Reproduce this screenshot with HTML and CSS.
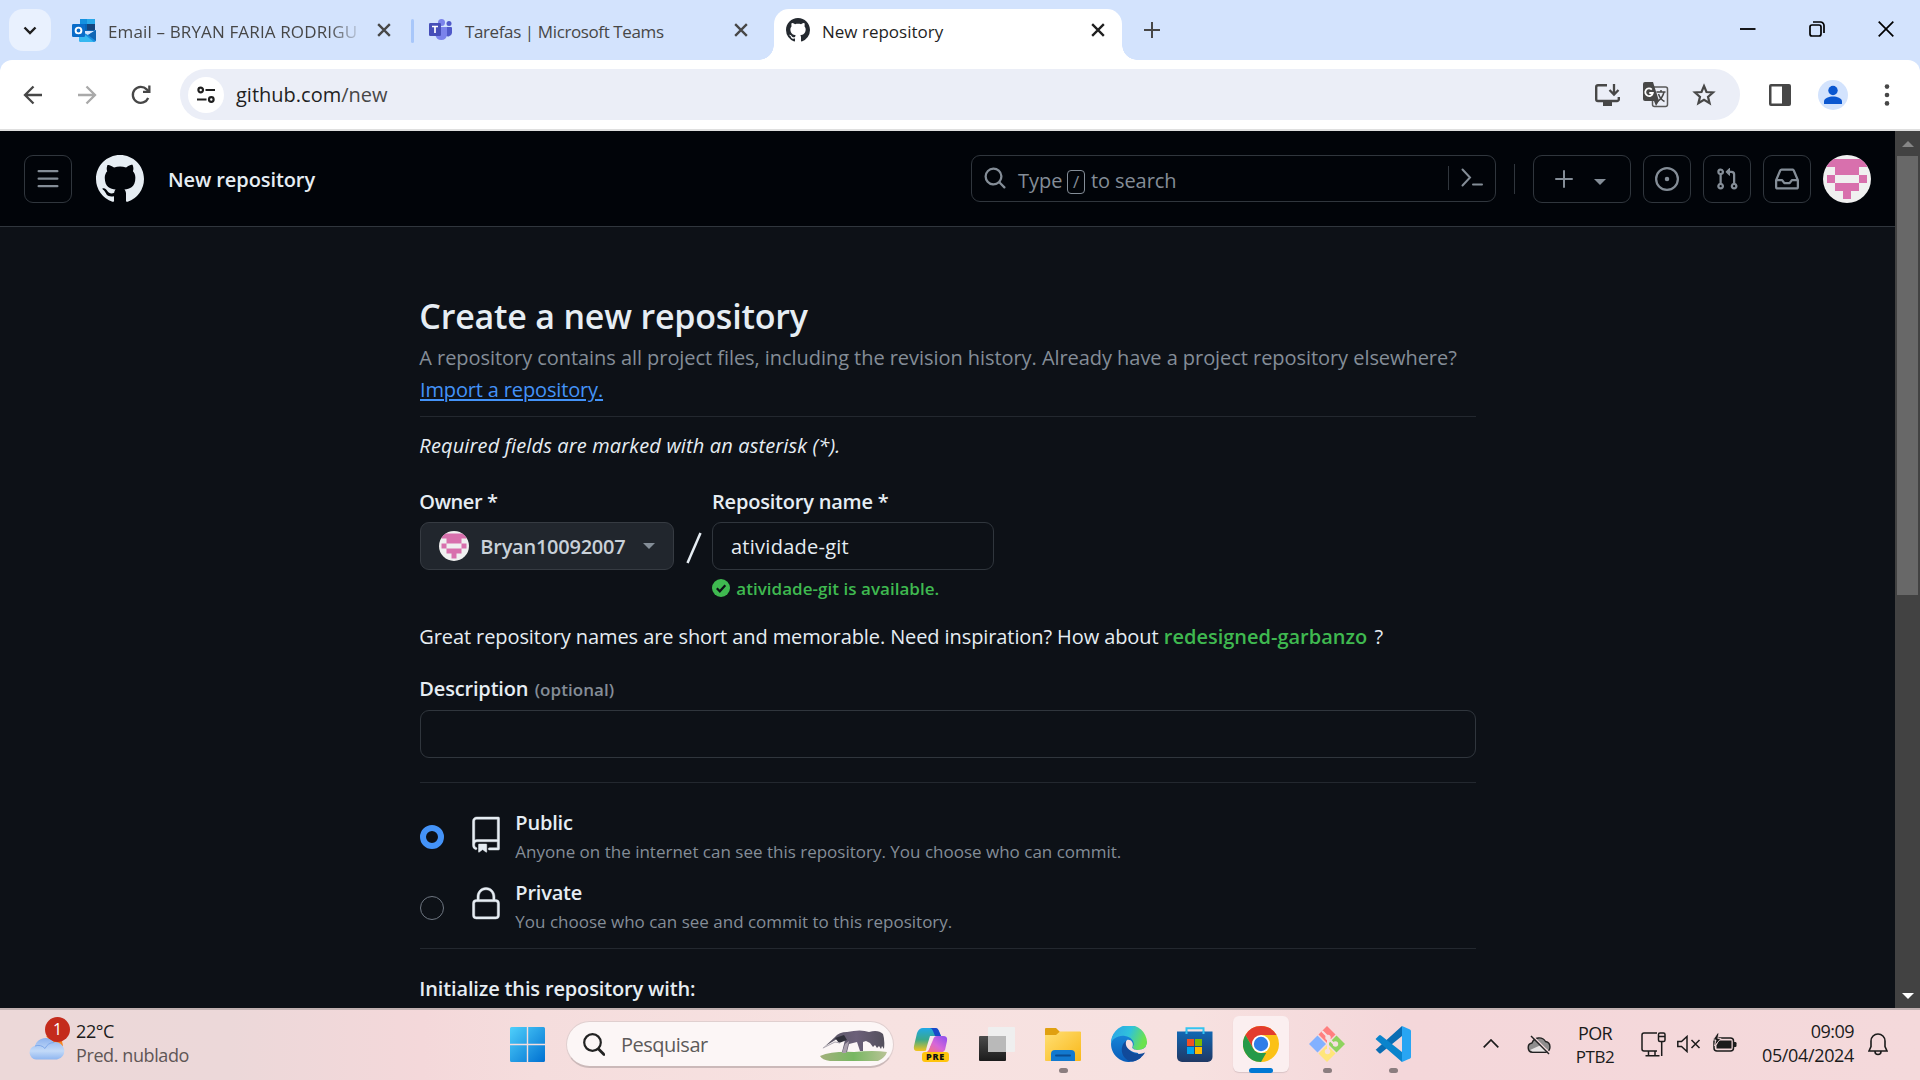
FILE: index.html
```html
<!DOCTYPE html>
<html lang="pt-BR">
<head>
<meta charset="utf-8">
<title>New repository</title>
<link rel="stylesheet" href="styles.css">
</head>
<body>
<svg class="defs" width="0" height="0">
  <defs>
    <symbol id="mark" viewBox="0 0 16 16"><path d="M8 0c4.42 0 8 3.58 8 8a8.013 8.013 0 0 1-5.45 7.59c-.4.08-.55-.17-.55-.38 0-.27.01-1.13.01-2.2 0-.75-.25-1.23-.54-1.48 1.78-.2 3.65-.88 3.65-3.95 0-.88-.31-1.59-.82-2.15.08-.2.36-1.02-.08-2.12 0 0-.67-.22-2.2.82-.64-.18-1.32-.27-2-.27-.68 0-1.36.09-2 .27-1.53-1.03-2.2-.82-2.2-.82-.44 1.1-.16 1.92-.08 2.12-.51.56-.82 1.28-.82 2.15 0 3.06 1.86 3.75 3.64 3.95-.23.2-.44.55-.51 1.07-.46.21-1.61.55-2.33-.66-.15-.24-.6-.83-1.23-.82-.67.01-.27.38.01.53.34.19.73.9.82 1.13.16.45.68 1.31 2.69.94 0 .67.01 1.3.01 1.49 0 .21-.15.45-.55.38A7.995 7.995 0 0 1 0 8c0-4.42 3.58-8 8-8Z"/></symbol>
    <symbol id="identicon" viewBox="0 0 12 12"><rect width="12" height="12" fill="#f0f0f0"/><path fill="#d870ad" d="M1 1h10v2H9v2H3V3H1zM1 5h2v2H1zM9 5h2v2H9zM3 7h6v2H7v2H5V9H3z"/></symbol>
    <symbol id="close" viewBox="0 0 12 12"><path d="M1 1l10 10M11 1L1 11" fill="none" stroke="currentColor" stroke-width="2"/></symbol>
  </defs>
</svg>

<header class="tabstrip">
  <div class="tab-search"><svg width="14" height="9" viewBox="0 0 14 9"><path d="M1.500 1.500L7 7l5.500-5.500" fill="none" stroke="#1f1f1f" stroke-width="2.400"/></svg></div>
  <div class="tab tab-mail">
    <svg class="favicon" width="24" height="23" viewBox="0 0 24 23"><rect x="8" y="0" width="15" height="12" rx="1" fill="#0b64b5"/><path d="M8 1a1 1 0 0 1 1-1h6v5H8z" fill="#1490df"/><path d="M15 0h7a1 1 0 0 1 1 1v4h-8z" fill="#28a8ea"/><path d="M8 5h7v6H8z" fill="#0364b8"/><path d="M15 5h8v6h-8z" fill="#14447d"/><path d="M7 11l9 5 8-5v10a2 2 0 0 1-2 2H9a2 2 0 0 1-2-2z" fill="#1a8ee0"/><path d="M7 11l15 12H9a2 2 0 0 1-2-2z" fill="#35b8f1"/><path d="M24 11v11l-8-6z" fill="#1066b5"/><rect y="5" width="13" height="13" rx="1.200" fill="#0a6cc9"/><circle cx="6.500" cy="11.500" r="2.900" fill="none" stroke="#fff" stroke-width="1.900"/></svg>
    <span class="tab-title t-mail">Email – BRYAN FARIA RODRIGU</span>
    <svg class="tab-close" width="14" height="14"><use href="#close"/></svg>
  </div>
  <div class="tab-sep"></div>
  <div class="tab tab-teams">
    <svg class="favicon" width="23" height="22" viewBox="0 0 23 22"><circle cx="20" cy="4.500" r="2.500" fill="#5059c9"/><path d="M15 8h7a1 1 0 0 1 1 1v5a4 4 0 0 1-7 2z" fill="#5059c9"/><circle cx="12.500" cy="3.500" r="3.500" fill="#7b83eb"/><path d="M7 8h11v8a5.800 5.800 0 0 1-11.500 0z" fill="#7b83eb"/><rect y="4" width="12" height="13" rx="1.200" fill="#464eb8"/><path d="M3 7.500h6M6 7.500v6.500" stroke="#fff" stroke-width="1.700"/></svg>
    <span class="tab-title t-teams">Tarefas | Microsoft Teams</span>
    <svg class="tab-close" width="14" height="14"><use href="#close"/></svg>
  </div>
  <div class="tab tab-active">
    <svg class="favicon" width="24" height="24" fill="#24292f"><use href="#mark"/></svg>
    <span class="tab-title t-repo">New repository</span>
    <svg class="tab-close" width="14" height="14"><use href="#close"/></svg>
  </div>
  <svg class="new-tab" width="16" height="16" viewBox="0 0 16 16"><path d="M8 0v16M0 8h16" stroke="#474747" stroke-width="2"/></svg>
  <div class="window-buttons">
    <svg width="16" height="16" viewBox="0 0 16 16"><path d="M0 8h15.500" stroke="#000" stroke-width="1.800"/></svg>
    <svg width="16" height="16" viewBox="0 0 16 16"><rect x="1" y="4" width="11" height="11" rx="2" fill="none" stroke="#000" stroke-width="1.700"/><path d="M4 1h7.500A3.500 3.500 0 0 1 15 4.500V12" fill="none" stroke="#000" stroke-width="1.700"/></svg>
    <svg width="16" height="16" viewBox="0 0 16 16"><path d="M.7.700l14.600 14.600M15.300.700L.7 15.300" stroke="#000" stroke-width="1.700"/></svg>
  </div>
</header>

<div class="toolbar-bg">
<div class="toolbar">
  <svg class="nav-back" width="20" height="20" viewBox="0 0 20 20"><path d="M19 10H2.500M10.500 1.500L2 10l8.500 8.500" fill="none" stroke="#474747" stroke-width="2.300"/></svg>
  <svg class="nav-fwd" width="20" height="20" viewBox="0 0 20 20"><path d="M1 10h16.500M9.500 1.500L18 10l-8.500 8.500" fill="none" stroke="#a9a9a9" stroke-width="2.300"/></svg>
  <svg class="nav-reload" width="20" height="20" viewBox="0 0 20 20"><path d="M17.200 13A8 8 0 1 1 15.700 4.400L18 6.500" fill="none" stroke="#474747" stroke-width="2.300"/><path d="M19.500 .5v7.500H12V5.700h5.200V.5z" fill="#474747"/></svg>
  <div class="omnibox">
    <div class="site-info"><svg width="18" height="18" viewBox="0 0 18 18" fill="none" stroke="#1f1f1f" stroke-width="2.200"><circle cx="3.700" cy="4" r="2.300"/><path d="M8.500 4H18M0 13.500h9.500"/><circle cx="14.300" cy="13.500" r="2.300"/></svg></div>
    <span class="url">github.com<span class="url-path">/new</span></span>
    <div class="omni-actions">
      <svg width="25" height="22" viewBox="0 0 25 22"><path d="M12 1.300H3A1.800 1.800 0 0 0 1.200 3v12.200A1.800 1.800 0 0 0 3 17h19a1.800 1.800 0 0 0 1.800-1.800V13" fill="none" stroke="#474747" stroke-width="2.400"/><path d="M8 18h9v4H8z" fill="#474747"/><path d="M19 0v10M14.500 6l4.500 4.600L23.500 6" fill="none" stroke="#474747" stroke-width="2.300"/></svg>
      <svg width="26" height="26" viewBox="0 0 26 26"><rect x="9.500" y="5" width="15" height="19.500" rx="2" fill="#ebeef7" stroke="#5a5a5a" stroke-width="1.500"/><path d="M2 0h8l6 19H2a2 2 0 0 1-2-2V2a2 2 0 0 1 2-2z" fill="#474747"/><path d="M11 19h5l-3 5z" fill="#474747"/><path d="M8.800 7.600A3.800 3.800 0 1 0 9.800 11H6.300" fill="none" stroke="#fff" stroke-width="1.800"/><path d="M13.500 10h9M18 8v2M21 10c-1 4.500-3.500 7.500-6.500 9.500M15.500 12c1 3 3 6 6 7.500" fill="none" stroke="#474747" stroke-width="1.500"/></svg>
      <svg width="24" height="23" viewBox="0 0 24 23"><path d="M12 3l2.500 6 6.500.5-5 4.300 1.600 6.400L12 16.800l-5.600 3.400L8 13.800 3 9.500 9.500 9z" fill="none" stroke="#474747" stroke-width="2.200"/></svg>
    </div>
  </div>
  <svg class="side-panel" width="22" height="22" viewBox="0 0 22 22"><path d="M2 0h18a2 2 0 0 1 2 2v18a2 2 0 0 1-2 2H2a2 2 0 0 1-2-2V2a2 2 0 0 1 2-2zm.500 2.500v17H13v-17z" fill="#474747" fill-rule="evenodd"/></svg>
  <svg class="profile" width="30" height="30" viewBox="0 0 30 30"><circle cx="15" cy="15" r="15" fill="#d3e3fd"/><circle cx="15" cy="10.500" r="4.700" fill="#0b57d0"/><path d="M6 24v-2.500c0-3.500 5-5 9-5s9 1.500 9 5V24z" fill="#0b57d0"/></svg>
  <svg class="kebab" width="6" height="22" viewBox="0 0 6 22" fill="#474747"><circle cx="3" cy="2.600" r="2.300"/><circle cx="3" cy="11" r="2.300"/><circle cx="3" cy="19.400" r="2.300"/></svg>
</div>
</div>

<div class="viewport">
  <div class="page">
    <div class="gh-header">
      <div class="btn menu-btn"><svg width="24" height="24" viewBox="0 0 16 16" fill="#848d97"><path d="M1 2.750A.75.750 0 0 1 1.750 2h12.500a.75.750 0 0 1 0 1.500H1.750A.75.750 0 0 1 1 2.750Zm0 5A.75.750 0 0 1 1.750 7h12.500a.75.750 0 0 1 0 1.500H1.750A.75.750 0 0 1 1 7.750ZM1.750 12h12.500a.75.750 0 0 1 0 1.500H1.750a.75.750 0 0 1 0-1.500Z"/></svg></div>
      <svg class="gh-logo" width="48" height="48" fill="#e6edf3"><use href="#mark"/></svg>
      <span class="gh-title">New repository</span>
      <div class="search">
        <svg width="24" height="24" viewBox="0 0 16 16" fill="#848d97"><path d="M10.680 11.740a6 6 0 0 1-7.922-8.982 6 6 0 0 1 8.982 7.922l3.040 3.040a.749.749 0 0 1-.326 1.275.749.749 0 0 1-.734-.215ZM11.500 7a4.499 4.499 0 1 0-8.997 0A4.499 4.499 0 0 0 11.500 7Z"/></svg>
        <span class="s-type">Type</span>
        <span class="s-key">/</span>
        <span class="s-rest">to search</span>
        <span class="s-div"></span>
        <svg class="s-cmd" width="22" height="20" viewBox="0 0 22 20" fill="none" stroke="#848d97" stroke-width="2" stroke-linecap="round"><path d="M1.500 1.500L9 9.500l-7.500 8M12 16.500h9"/></svg>
      </div>
      <div class="h-div"></div>
      <div class="btn add-btn"><svg width="18" height="18" viewBox="0 0 18 18"><path d="M9 1v16M1 9h16" stroke="#848d97" stroke-width="2" stroke-linecap="round"/></svg><i class="caret"></i></div>
      <div class="btn"><svg width="24" height="24" viewBox="0 0 16 16" fill="#848d97"><path d="M8 9.500a1.500 1.500 0 1 0 0-3 1.500 1.500 0 0 0 0 3Z"/><path d="M8 0a8 8 0 1 1 0 16A8 8 0 0 1 8 0ZM1.500 8a6.500 6.500 0 1 0 13 0 6.500 6.500 0 0 0-13 0Z"/></svg></div>
      <div class="btn"><svg width="24" height="24" viewBox="0 0 16 16" fill="#848d97"><path d="M1.500 3.250a2.250 2.250 0 1 1 3 2.122v5.256a2.251 2.251 0 1 1-1.500 0V5.372A2.250 2.250 0 0 1 1.500 3.250Zm5.677-.177L9.573.677A.25.250 0 0 1 10 .854V2.500h1A2.500 2.500 0 0 1 13.500 5v5.628a2.251 2.251 0 1 1-1.500 0V5a1 1 0 0 0-1-1h-1v1.646a.25.250 0 0 1-.427.177L7.177 3.427a.25.250 0 0 1 0-.354ZM3.750 2.500a.75.750 0 1 0 0 1.500.75.750 0 0 0 0-1.500Zm0 9.500a.75.750 0 1 0 0 1.500.75.750 0 0 0 0-1.500Zm8.250.750a.75.750 0 1 0 1.500 0 .75.750 0 0 0-1.500 0Z"/></svg></div>
      <div class="btn"><svg width="24" height="24" viewBox="0 0 16 16" fill="#848d97"><path d="M2.800 2.060A1.750 1.750 0 0 1 4.410 1h7.180c.7 0 1.333.417 1.610 1.060l2.740 6.395c.04.093.06.194.06.295v4.500A1.750 1.750 0 0 1 14.250 15H1.750A1.750 1.750 0 0 1 0 13.250v-4.500c0-.101.02-.202.06-.295Zm1.610.440a.25.250 0 0 0-.23.152L1.887 8H4.750a.75.750 0 0 1 .6.300L6.625 10h2.750l1.275-1.700a.75.750 0 0 1 .6-.300h2.863L11.820 2.652a.25.250 0 0 0-.23-.152Zm10.090 7h-2.875l-1.275 1.700a.75.750 0 0 1-.6.300h-3.500a.75.750 0 0 1-.6-.300L4.375 9.500H1.500v3.750c0 .138.112.250.250.250h12.500a.25.250 0 0 0 .250-.250Z"/></svg></div>
      <svg class="avatar avatar-lg" width="48" height="48"><use href="#identicon"/></svg>
    </div>

    <main class="content">
      <h1>Create a new repository</h1>
      <p class="lead"><span class="lead-text">A repository contains all project files, including the revision history. Already have a project repository elsewhere?</span><br><a>Import a repository.</a></p>
      <p class="required">Required fields are marked with an asterisk (*).</p>
      <div class="fields">
        <div class="field owner">
          <div class="label owner-label">Owner *</div>
          <div class="select"><svg class="avatar" width="30" height="30"><use href="#identicon"/></svg><span>Bryan10092007</span><i class="caret"></i></div>
        </div>
        <div class="slash"><svg width="16" height="32" viewBox="0 0 16 32"><path d="M1.500 31L14.500 1" stroke="#e6edf3" stroke-width="2.500"/></svg></div>
        <div class="field">
          <div class="label name-label">Repository name *</div>
          <div class="input name-input">atividade-git</div>
          <div class="valid"><svg width="18" height="18" viewBox="0 0 18 18"><circle cx="9" cy="9" r="9" fill="#3fb950"/><path d="M4.800 9.300l3 3 5.500-6" fill="none" stroke="#0d1117" stroke-width="2.200"/></svg><span>atividade-git is available.</span></div>
        </div>
      </div>
      <p class="hint"><span class="hint-text">Great repository names are short and memorable. Need inspiration? How about</span><b>redesigned-garbanzo</b><span>?</span></p>
      <div class="label desc-label"><span>Description</span><small>(optional)</small></div>
      <div class="input desc-input"></div>
      <div class="rule"></div>
      <div class="option option-public">
        <span class="radio checked"></span>
        <svg class="opt-icon" width="36" height="36" viewBox="0 0 24 24"><path d="M3 2.750A2.750 2.750 0 0 1 5.750 0h14.500a.75.750 0 0 1 .750.750v20.500a.75.750 0 0 1-.750.750h-6a.75.750 0 0 1 0-1.500h5.250v-4H6A1.500 1.500 0 0 0 4.500 18v.750c0 .716.430 1.334 1.050 1.605a.75.750 0 0 1-.6 1.374A3.251 3.251 0 0 1 3 18.750ZM19.500 1.500H5.750c-.690 0-1.250.560-1.250 1.250v12.651A2.989 2.989 0 0 1 6 15h13.500Z"/><path d="M7 18.250a.25.250 0 0 1 .250-.250h5a.25.250 0 0 1 .250.250v5.010a.25.250 0 0 1-.397.201l-2.206-1.604a.25.250 0 0 0-.294 0L7.397 23.460a.25.250 0 0 1-.397-.200v-5.010Z"/></svg>
        <div class="opt-text"><div class="opt-title">Public</div><div class="opt-sub">Anyone on the internet can see this repository. You choose who can commit.</div></div>
      </div>
      <div class="option option-private">
        <span class="radio"></span>
        <svg class="opt-icon" width="36" height="36" viewBox="0 0 24 24"><path d="M6 9V7.250C6 3.845 8.503 1 12 1s6 2.845 6 6.250V9h.5a2.500 2.500 0 0 1 2.500 2.500v8a2.500 2.500 0 0 1-2.500 2.500h-13A2.500 2.500 0 0 1 3 19.500v-8A2.500 2.500 0 0 1 5.500 9Zm-1.500 2.500v8a1 1 0 0 0 1 1h13a1 1 0 0 0 1-1v-8a1 1 0 0 0-1-1h-13a1 1 0 0 0-1 1Zm3-4.250V9h9V7.250c0-2.670-1.922-4.750-4.500-4.750-2.578 0-4.500 2.080-4.500 4.750Z"/></svg>
        <div class="opt-text"><div class="opt-title">Private</div><div class="opt-sub">You choose who can see and commit to this repository.</div></div>
      </div>
      <div class="rule rule-2"></div>
      <div class="label init">Initialize this repository with:</div>
    </main>
  </div>
  <div class="scrollbar"><i class="up"></i><div class="thumb"></div><i class="down"></i></div>
</div>

<footer class="taskbar">
  <div class="weather">
    <div class="cloud">
      <svg width="36" height="38" viewBox="0 0 36 38"><defs><linearGradient id="cl" x1="0" y1="0" x2="0" y2="1"><stop offset="0" stop-color="#8db2ee"/><stop offset=".6" stop-color="#c3daf8"/><stop offset="1" stop-color="#8fb6f0"/></linearGradient></defs><path d="M17 14h15l2 10-5 4z" fill="#f7831e"/><path d="M7 37.500a7 7 0 0 1-1-13.800 11 11 0 0 1 19-3.500 8.700 8.700 0 0 1 3 17.300z" fill="url(#cl)"/><path d="M6 24q6-2 10 2.500 3-6 9-6" fill="none" stroke="#7fa8ea" stroke-width="1"/></svg>
      <span class="badge">1</span>
    </div>
    <div class="weather-text"><span class="temp">22°C</span><span class="forecast">Pred. nublado</span></div>
  </div>
  <svg class="start" width="35" height="35" viewBox="0 0 35 35"><defs><linearGradient id="win" x1="0" y1="0" x2="1" y2="1"><stop offset="0" stop-color="#4fd0fb"/><stop offset="1" stop-color="#0070d1"/></linearGradient></defs><path fill="url(#win)" d="M1.500 0H16.800v16.800H0V1.500A1.500 1.500 0 0 1 1.500 0zM18.200 0H33.500A1.500 1.500 0 0 1 35 1.500V16.800H18.200zM0 18.200h16.800V35H1.500A1.500 1.500 0 0 1 0 33.500zM18.200 18.200H35V33.500A1.500 1.500 0 0 1 33.500 35H18.200z"/></svg>
  <div class="tb-search">
    <svg width="22" height="23" viewBox="0 0 22 23"><circle cx="9.500" cy="9.500" r="8.300" fill="none" stroke="#222" stroke-width="2.200"/><path d="M15.500 16l5.500 5.500" stroke="#222" stroke-width="2.800" stroke-linecap="round"/></svg>
    <span class="tb-placeholder">Pesquisar</span>
    <svg class="anteater" width="68" height="32" viewBox="0 0 68 32"><defs><linearGradient id="grass" x1="0" x2="1"><stop offset="0" stop-color="#a3b07c"/><stop offset=".5" stop-color="#77b862"/><stop offset="1" stop-color="#b9c396"/></linearGradient><linearGradient id="fur" x1="0" x2="1"><stop offset="0" stop-color="#55535f"/><stop offset=".55" stop-color="#6c6079"/><stop offset="1" stop-color="#54505c"/></linearGradient></defs><path d="M0 26q12-5 34-4 20-2 33 0-2 6-9 9H10Q2 30 0 26z" fill="url(#grass)"/><path d="M2 19L15 7q4-5 12-5 14-3 22 0 9-3 14 2 2 6 1 15l-2-3-1 3-2-3-2 2-2-3-2 2-3-4-4-2-3 1v9h-3l-3-9-8 2-2 8h-5l3-12-8-1-10 6-5 4z" fill="url(#fur)"/><path d="M15 8l9-3 3 5-8 3z" fill="#2f2f39"/><path d="M3 18l12-6 5 1" stroke="#aaa4ae" fill="none"/><path d="M29 11l-3 12h-4l3-9z" fill="#aaa0ad"/></svg>
  </div>
  <div class="apps">
    <div class="app"><svg width="36" height="36" viewBox="0 0 36 36"><defs><linearGradient id="cp1" x1="0" y1="0" x2="0" y2="1"><stop offset="0" stop-color="#20a8e8"/><stop offset=".5" stop-color="#3aa88c"/><stop offset="1" stop-color="#f4c51c"/></linearGradient><linearGradient id="cp2" x1="1" y1="0" x2="0" y2="1"><stop offset="0" stop-color="#8a4df0"/><stop offset=".5" stop-color="#d767d8"/><stop offset="1" stop-color="#ff7a5c"/></linearGradient></defs><path d="M10 2h12q3 0 4 4l2 4h-6q-3 0-4 4l-3 8q-1 3-4 3H4q-4 0-3-5L4 7q2-5 6-5z" fill="url(#cp1)"/><path d="M17 2h6q2 0 3 3l2 5h-6l-2-5q-1-3-3-3z" fill="#1949c9"/><path d="M24 10h6q5 0 4 5l-2 9q-2 3-6 3H11q4-1 5-4l4-9q1-4 4-4z" fill="url(#cp2)"/><path d="M17 10h5q-2 1-3 4l-3 9q-1 3-3 3 0-3 1-6z" fill="#f9e5ef"/></svg><span class="pre">PRE</span></div>
    <div class="app"><svg width="36" height="36" viewBox="0 0 36 36"><defs><linearGradient id="tv" x1="0" y1="0" x2="0" y2="1"><stop offset="0" stop-color="#4b4b4b"/><stop offset="1" stop-color="#1b1b1b"/></linearGradient></defs><rect x="0" y="10" width="27" height="25" rx="1" fill="url(#tv)"/><rect x="9" y="1" width="27" height="25" rx="1" fill="#efefef"/><path d="M9 10h18v16H10a1 1 0 0 1-1-1z" fill="#b9b9b9"/></svg></div>
    <div class="app"><svg width="36" height="36" viewBox="0 0 36 36"><defs><linearGradient id="fo" x1="0" y1="0" x2="1" y2="1"><stop offset="0" stop-color="#ffdf74"/><stop offset="1" stop-color="#f9b81a"/></linearGradient></defs><path d="M0 3a1 1 0 0 1 1-1h10l4 4h20a1 1 0 0 1 1 1v5H0z" fill="#e0a010"/><path d="M0 9h11l4-3.500h20a1 1 0 0 1 1 1V34a1 1 0 0 1-1 1H1a1 1 0 0 1-1-1z" fill="url(#fo)"/><path d="M6 35V28a4 4 0 0 1 4-4h16a4 4 0 0 1 4 4v7z" fill="#1279cf"/><path d="M11 29.500h14" stroke="#0a4d92" stroke-width="2" stroke-linecap="round"/></svg><i class="dot"></i></div>
    <div class="app"><svg width="36" height="36" viewBox="0 0 36 36"><defs><linearGradient id="e1" x1="0" y1="0" x2="1" y2=".3"><stop offset="0" stop-color="#2c9fe8"/><stop offset=".55" stop-color="#2fc2dc"/><stop offset="1" stop-color="#6be24f"/></linearGradient><linearGradient id="e2" x1="0" y1="0" x2="0" y2="1"><stop offset="0" stop-color="#1c93e3"/><stop offset="1" stop-color="#0a5cb8"/></linearGradient></defs><path d="M18 0A18 18 0 1 0 33 28L34 22 36 16z" fill="url(#e2)"/><path d="M22 20c-1 2 2 4 6 4 4 0 7-2 9-5v14h-6z" fill="#f7dfdf"/><path d="M0 18A18 18 0 0 1 36 16c0 5-4 8-9 8-4 0-6-2-5-4 2-2 0-9-8-10C7 9 1 13 0 18z" fill="url(#e1)"/><path d="M15 15c-8 6-4 20 7 20.500 5-1 10-5 12-9-6 3-18 2-19-11.500z" fill="#114a9a"/><path d="M16 14c4-1 7 3 5.500 6.500-1 2 2 3.500 5.500 3.500 2 0 5-.7 7-2.500v4c-6 3-15 1-18.500-5-1-2-1-5 .5-6.500z" fill="#f7dfdf"/></svg></div>
    <div class="app"><svg width="36" height="36" viewBox="0 0 36 36"><defs><linearGradient id="st" x1="0" y1="0" x2="0" y2="1"><stop offset="0" stop-color="#1167b3"/><stop offset="1" stop-color="#203864"/></linearGradient></defs><path d="M9.500 8V2.200h17V8" fill="none" stroke="#34c4f0" stroke-width="2"/><path d="M0 5.500h35.500V31a5 5 0 0 1-5 5H5a5 5 0 0 1-5-5z" fill="url(#st)"/><path d="M9.500 5v3M26.500 5v3" stroke="#34c4f0" stroke-width="2"/><path d="M10 13h7v7h-7z" fill="#f25022"/><path d="M18 13h7v7h-7z" fill="#7fba00"/><path d="M10 21h7v7h-7z" fill="#00a4ef"/><path d="M18 21h7v7h-7z" fill="#ffb900"/></svg></div>
    <div class="app app-active"><svg width="36" height="36" viewBox="0 0 36 36"><circle cx="18" cy="18" r="18" fill="#fbc116"/><path d="M18 0a18 18 0 0 1 15.600 9H18L10.200 22.500 2.400 9A18 18 0 0 1 18 0z" fill="#e33b2e"/><path d="M2.400 9l7.800 13.500A9 9 0 0 0 18 27h5.200L18 36A18 18 0 0 1 2.400 9z" fill="#269a49"/><circle cx="18" cy="18" r="9" fill="#fff"/><circle cx="18" cy="18" r="7.200" fill="#2f7de9"/></svg><i class="bar"></i></div>
    <div class="app"><svg width="36" height="36" viewBox="0 0 36 36"><path d="M18 0l8.500 8.500L18 17 9.500 8.500z" fill="#ff7f7f"/><path d="M8.500 9.500L17 18l-8.500 8.500L0 18z" fill="#82b1ff"/><path d="M27.500 9.500L36 18l-8.500 8.500L19 18z" fill="#8fd35f"/><path d="M18 19l8.500 8.500L18 36l-8.500-8.500z" fill="#ffe57a"/><path d="M13 5l6 6v15M19 12l7 7" fill="none" stroke="#f6dfe0" stroke-width="2"/><circle cx="19" cy="11.500" r="2.700" fill="#f6dfe0"/><circle cx="18.500" cy="25.500" r="2.700" fill="#f6dfe0"/><circle cx="26.500" cy="18" r="2.700" fill="#f6dfe0"/></svg><i class="dot"></i></div>
    <div class="app"><svg width="36" height="36" viewBox="0 0 36 36"><path d="M1 24l3 3q1 1 2 0L27 10V0L1 23.500q-.7.500 0 .5z" fill="#0a6db3"/><path d="M1 12.500l3-3q1-1 2 0L27 26v10L1 13.500q-.7-.5 0-1z" fill="#0a84cc"/><path d="M27 0l8 3.500q1 .5 1 1.500v26q0 1-1 1.500L27 36z" fill="#28a5f3"/></svg><i class="dot"></i></div>
  </div>
  <div class="tray">
    <svg class="chev" width="16" height="9" viewBox="0 0 16 9"><path d="M.7 8.300L8 1l7.300 7.300" fill="none" stroke="#1b1b1b" stroke-width="1.700"/></svg>
    <svg class="onedrive" width="24" height="20" viewBox="0 0 24 20"><path d="M5.500 17.300A4.700 4.700 0 0 1 5 8a7.500 7.500 0 0 1 13.500-1.500 5.500 5.500 0 0 1 0 10.800z" fill="#8f8d8d" stroke="#222" stroke-width="1.400"/><path d="M3 15l11-5 7 5-2.500 1.600H5.500z" fill="#e8e4e4"/><path d="M5.500 .8l17 17" stroke="#f5d9dc" stroke-width="1.500"/><path d="M4 1l18 18" stroke="#222" stroke-width="1.500"/></svg>
    <div class="lang"><span class="lang-name">POR</span><span class="lang-kbd">PTB2</span></div>
    <svg class="net" width="25" height="25" viewBox="0 0 25 25" fill="none" stroke="#1b1b1b" stroke-width="1.500"><path d="M16 1H3a2 2 0 0 0-2 2v14a2 2 0 0 0 2 2h13M4.500 23.700h14M7.500 19v4.500M14 19v4.500M20.700 9.500V24"/><rect x="17.500" y="1" width="6.500" height="8.500" rx="1.500"/><path d="M18 4.500h6"/></svg>
    <svg class="vol" width="24" height="18" viewBox="0 0 24 18" fill="none" stroke="#1b1b1b" stroke-width="1.500"><path d="M.8 6.500v5h3.700l5.500 5V1.500l-5.500 5zM14.500 5l8 8M22.500 5l-8 8"/></svg>
    <svg class="batt" width="24" height="20" viewBox="0 0 24 20"><rect x="1" y="5" width="19.500" height="13" rx="3" fill="none" stroke="#1b1b1b" stroke-width="1.500"/><path d="M6 7.500h12.500v8H3.500v-3z" fill="#1b1b1b"/><path d="M21 9h1.300q1.200 0 1.200 1.200v2.600q0 1.200-1.200 1.200H21z" fill="#1b1b1b"/><path d="M4.500 0L0 7h3l-1.500 6L8 5.500H4.800L6 0z" fill="#1b1b1b" stroke="#f5d9dc" stroke-width=".8"/></svg>
    <div class="clock"><span class="time">09:09</span><span class="date">05/04/2024</span></div>
    <svg class="bell" width="20" height="23" viewBox="0 0 20 23" fill="none" stroke="#1b1b1b" stroke-width="1.600"><path d="M10 1a7 7 0 0 0-7 7v5.500L1 18h18l-2-4.500V8a7 7 0 0 0-7-7zM7 18.500a3 3 0 0 0 6 0"/></svg>
  </div>
</footer>
</body>
</html>
```
FILE: styles.css
```css
* { box-sizing: border-box; }
body { margin: 0; width: 1920px; height: 1080px; overflow: hidden; display: flex; flex-direction: column; font-family: "Open Sans", "Noto Sans", sans-serif; background: #0d1117; color: #e6edf3; }
svg { display: block; flex: none; }
span, b, small { white-space: nowrap; }
p, h1 { margin: 0; }
.defs { display: none; }

/* browser tab strip */
.tabstrip { height: 60px; background: #d3e3fd; display: flex; flex: none; color: #474747; font-size: 17px; }
.tab-search { width: 42px; height: 42px; margin: 9px 0 0 9px; border-radius: 14px; background: #e9f1fe; display: flex; align-items: center; justify-content: center; }
.tab { display: flex; align-items: center; height: 51px; margin-top: 9px; padding-bottom: 9px; }
.tab-title { line-height: 24px; margin-top: 3px; }
.tab-mail { width: 339px; margin-left: 21px; }
.t-mail { margin-left: 12px; width: 251px; letter-spacing: .14px; -webkit-mask-image: linear-gradient(90deg, #000 88%, transparent 102%); mask-image: linear-gradient(90deg, #000 88%, transparent 102%); }
.tab-mail .tab-close { margin-left: 18px; }
.tab-sep { width: 3px; height: 24px; margin-top: 19px; border-radius: 2px; background: #a8c7fa; }
.tab-teams { width: 360px; padding-left: 15px; }
.t-teams { margin-left: 13px; letter-spacing: -.39px; }
.tab-teams .tab-close { margin-left: auto; margin-right: 26px; }
.tab-active { position: relative; width: 348px; padding-left: 12px; background: #fff; border-radius: 15px 15px 0 0; color: #1f1f1f; }
.t-repo { margin-left: 12px; }
.tab-active .tab-close { margin-left: auto; margin-right: 17px; }
.tab-active::before, .tab-active::after { content: ""; position: absolute; bottom: 0; width: 15px; height: 15px; }
.tab-active::before { left: -15px; background: radial-gradient(circle at 0 0, transparent 14.5px, #fff 15px); }
.tab-active::after { right: -15px; background: radial-gradient(circle at 100% 0, transparent 14.5px, #fff 15px); }
.new-tab { margin: 22px 0 0 22px; }
.window-buttons { display: flex; gap: 53px; margin: 21px 26px 0 auto; }

/* browser toolbar */
.toolbar-bg { background: #d3e3fd; flex: none; }
.toolbar { height: 71px; background: #fff; border-bottom: 2px solid #dfdfdf; border-radius: 12px 12px 0 0; display: flex; align-items: center; }
.nav-back { margin-left: 23px; }
.nav-fwd { margin-left: 34px; }
.nav-reload { margin-left: 34px; }
.omnibox { width: 1560px; height: 51px; margin-left: 29px; border-radius: 26px; background: #ebeef7; display: flex; align-items: center; }
.site-info { width: 36px; height: 36px; margin-left: 8px; border-radius: 50%; background: #fff; display: flex; align-items: center; justify-content: center; }
.url { margin-left: 12px; font-size: 20px; line-height: 28px; color: #1f1f1f; }
.url-path { color: #474747; }
.omni-actions { display: flex; align-items: center; gap: 23px; margin: 0 24px 0 auto; }
.side-panel { margin-left: 29px; }
.profile { margin-left: 27px; }
.kebab { margin-left: 36px; }

/* page viewport */
.viewport { height: 877px; flex: none; display: flex; overflow: hidden; }
.page { flex: 1; min-width: 0; }
.gh-header { height: 96px; background: #010409; border-bottom: 1px solid #30363d; display: flex; align-items: center; padding-left: 24px; }
.btn { width: 48px; height: 48px; margin-right: 12px; border: 1px solid #30363d; border-radius: 9px; display: flex; align-items: center; justify-content: center; flex: none; }
.menu-btn { margin-right: 24px; }
.gh-title { margin: 2px 0 0 24px; font-size: 20px; font-weight: 600; line-height: 32px; width: 147px; letter-spacing: -.09px; }
.search { width: 525px; height: 47px; margin: 0 0 1px 656px; padding-left: 11px; border: 1px solid #30363d; border-radius: 9px; display: flex; align-items: center; font-size: 20px; line-height: 30px; color: #848d97; }
.s-type { margin-left: 11px; margin-top: 5px; width: 43px; }
.s-key { width: 18px; height: 24px; margin: 7px 6px 0 6px; border: 1px solid #848d97; border-radius: 4px; font-size: 17px; line-height: 21px; text-align: center; }
.s-rest { margin-top: 5px; width: 84px; letter-spacing: -.1px; }
.s-div { width: 1px; height: 24px; margin-left: 273px; background: #30363d; }
.s-cmd { margin-left: 12px; }
.h-div { width: 1px; height: 30px; margin: 0 18px; background: #30363d; }
.add-btn { width: 98px; padding-right: 4px; }
.caret { border: 6px solid transparent; border-top-color: #848d97; border-bottom: 0; }
.add-btn .caret { margin: 7px 0 0 21px; }
.avatar { border-radius: 50%; }

/* form */
.content { width: 1056px; margin-left: 420px; padding-top: 65px; font-size: 20px; line-height: 32px; text-indent: -.7px; }
h1 { font-size: 34px; line-height: 48px; font-weight: 600; margin-bottom: 2px; letter-spacing: -.2px; }
.lead { color: #848d97; padding-bottom: 10px; border-bottom: 1px solid #23282f; }
.lead-text { letter-spacing: -.055px; }
.lead a { color: #4493f8; letter-spacing: -.15px; text-decoration: underline; text-decoration-thickness: 2px; text-underline-offset: 2px; }
.required { margin-top: 13px; font-style: italic; letter-spacing: .14px; }
.fields { display: flex; margin-top: 24px; }
.label { font-weight: 600; height: 32px; }
.owner-label { letter-spacing: -.4px; }
.name-label { letter-spacing: -.2px; text-indent: 0; }
.select { width: 254px; height: 48px; margin-top: 4px; padding-left: 18px; border: 1px solid #363b42; border-radius: 9px; background: #21262d; display: flex; align-items: center; font-weight: 600; color: #c9d1d9; letter-spacing: -.25px; }
.select span { margin: 2px 18px 0 12px; }
.slash { width: 38px; padding: 46px 0 0 12px; }
.input { border: 1px solid #30363d; border-radius: 9px; height: 48px; }
.name-input { width: 282px; margin-top: 4px; padding: 8px 0 0 18px; letter-spacing: .26px; text-indent: 0; }
.valid { display: flex; align-items: center; height: 24px; margin-top: 6px; font-size: 17px; line-height: 24px; font-weight: 600; color: #3fb950; }
.valid span { margin: 2px 0 0 7px; letter-spacing: .03px; }
.hint { display: flex; margin-top: 21px; }
.hint-text { letter-spacing: -.096px; }
.hint b { font-weight: 600; color: #3fb950; margin: 0 8px 0 6px; }
.desc-label { display: flex; margin-top: 20px; letter-spacing: -.17px; }
.desc-label small { margin-left: 7px; font-size: 17px; color: #848d97; line-height: 34px; letter-spacing: .05px; }
.desc-input { margin-top: 5px; }
.rule { height: 1px; margin: 24px 0; background: #23282f; }
.option { display: flex; align-items: flex-start; height: 56px; }
.option-private { height: 57px; margin-top: 14px; }
.radio { width: 24px; height: 24px; margin-top: 18px; border: 1px solid #6e7681; border-radius: 50%; }
.checked { border: 6px solid #4493f8; }
.option-private .radio { margin-top: 19px; }
.opt-icon { margin: 10px 12px 0 24px; fill: #e6edf3; stroke: #e6edf3; stroke-width: .3; overflow: visible; }
.option-private .opt-icon { margin-top: 9px; }
.opt-title { font-weight: 600; height: 32px; letter-spacing: -.2px; }
.opt-sub { font-size: 17px; line-height: 24px; color: #848d97; padding-top: 1px; }
.rule-2 { margin-top: 14px; }
.init { letter-spacing: -.15px; }

/* scrollbar */
.scrollbar { width: 25px; background: #424242; display: flex; flex-direction: column; align-items: center; }
.up { margin-top: 10px; border: 6px solid transparent; border-bottom-color: #868686; border-top: 0; }
.thumb { width: 21px; height: 439px; margin-top: 9px; background: #686868; }
.down { margin: auto 0 9px; border: 6px solid transparent; border-top-color: #fff; border-bottom: 0; }

/* desktop taskbar */
.taskbar { height: 72px; flex: none; display: flex; border-top: 2px solid #c1b1b1; background: linear-gradient(90deg, #ecd8d8 0, #ecd8d9 12%, #f4d8da 22%, #f5dddd 28%, #f7e2e1 45%, #f7e1e0 62%, #f4d7da 73%, #f4d9db 100%); color: #1b1b1b; font-size: 18px; }
.weather { width: 510px; padding-left: 29px; display: flex; flex: none; }
.cloud { position: relative; width: 36px; padding-top: 12px; }
.badge { position: absolute; left: 16px; top: 7px; width: 25px; height: 25px; border-radius: 50%; background: #c42b1c; color: #fff; font-size: 16px; line-height: 24px; text-align: center; }
.weather-text { display: flex; flex-direction: column; align-items: flex-start; margin-left: 11px; padding-top: 9px; line-height: 24px; letter-spacing: -.4px; }
.forecast { color: #5f5656; }
.start { margin-top: 17px; }
.tb-search { width: 328px; height: 47px; margin: 11px 4px 0 21px; padding-left: 16px; border: 1px solid #e0cfcf; border-bottom: 2px solid #cbb9b9; border-radius: 24px; background: #fcf6f6; display: flex; align-items: center; color: #5d5a5a; }
.tb-placeholder { width: 87px; margin: 2px 0 0 16px; font-size: 20px; line-height: 28px; letter-spacing: -.5px; }
.anteater { margin: 3px 0 0 112px; }
.apps { display: flex; height: 70px; }
.app { position: relative; width: 66px; padding: 16px 0 0 15px; }
.app svg { position: relative; }
.dot, .bar { position: absolute; left: 29px; top: 58px; width: 9px; height: 5px; border-radius: 3px; background: #8b7d7f; }
.bar { left: 21px; width: 24px; background: #0078d4; }
.app-active::before { content: ""; position: absolute; left: 5px; top: 6px; width: 56px; height: 56px; border-radius: 6px; background: #fbeff0; box-shadow: 0 1px 1px #d9c4c6; }
.pre { position: absolute; left: 24px; top: 42px; width: 27px; height: 10px; border-radius: 3px; background: #ffc40c; color: #111; font-size: 9px; line-height: 10px; font-weight: 800; text-align: center; letter-spacing: .7px; }
.tray { display: flex; margin-left: 57px; }
.chev { margin-top: 29px; }
.onedrive { margin: 25px 0 0 28px; }
.lang { width: 40px; margin-left: 24px; padding-top: 12px; line-height: 23px; display: flex; flex-direction: column; align-items: center; }
.lang-name { letter-spacing: -.6px; }
.lang-kbd { font-size: 17px; letter-spacing: -.5px; }
.net { margin: 22px 0 0 26px; }
.vol { margin: 25px 0 0 11px; }
.batt { margin: 23px 0 0 12px; }
.clock { width: 92px; margin-left: 25px; padding-top: 9px; line-height: 24px; display: flex; flex-direction: column; align-items: flex-end; }
.time { letter-spacing: -.55px; }
.date { letter-spacing: -.35px; }
.bell { margin: 23px 0 0 14px; }
```
